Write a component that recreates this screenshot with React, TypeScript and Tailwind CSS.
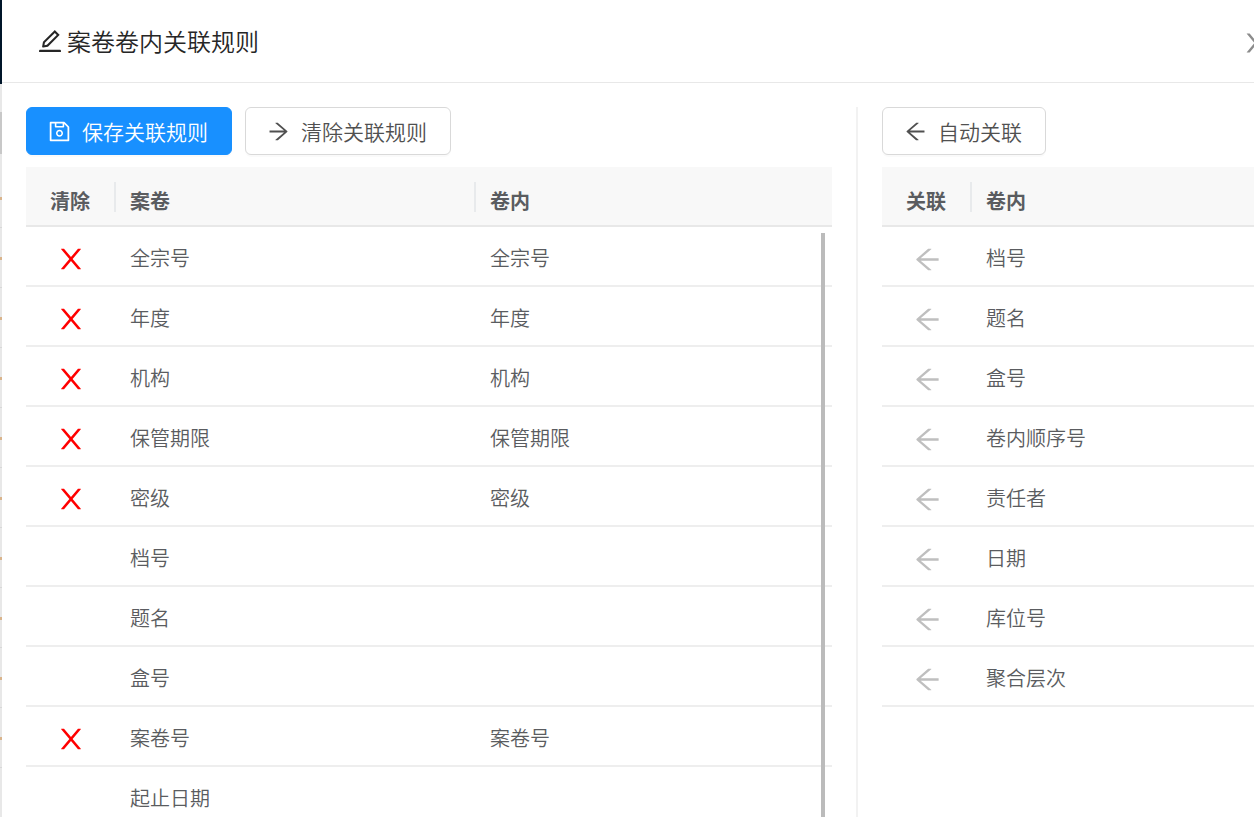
import type { ReactNode } from "react";
import {
  AiOutlineArrowLeft,
  AiOutlineArrowRight,
  AiOutlineEdit,
  AiOutlineSave,
} from "react-icons/ai";

const rules = [
  { volume: "全宗号", item: "全宗号" },
  { volume: "年度", item: "年度" },
  { volume: "机构", item: "机构" },
  { volume: "保管期限", item: "保管期限" },
  { volume: "密级", item: "密级" },
  { volume: "档号", item: "" },
  { volume: "题名", item: "" },
  { volume: "盒号", item: "" },
  { volume: "案卷号", item: "案卷号" },
  { volume: "起止日期", item: "" },
];

const fields = ["档号", "题名", "盒号", "卷内顺序号", "责任者", "日期", "库位号", "聚合层次"];

function CloseIcon({ size }: { size: number }) {
  return (
    <svg viewBox="0 0 1024 1024" width={size} height={size} fill="currentColor" aria-hidden="true">
      <path d="M563.8 512l262.5-312.9c4.4-5.2.7-13.1-6.1-13.1h-79.8c-4.7 0-9.2 2.1-12.3 5.7L511.6 449.8 295.1 191.7c-3-3.6-7.5-5.7-12.3-5.7H203c-6.8 0-10.5 7.9-6.1 13.1L459.4 512 196.9 824.9A7.95 7.95 0 0 0 203 838h79.8c4.7 0 9.2-2.1 12.3-5.7l216.5-258.1 216.5 258.1c3 3.6 7.5 5.7 12.3 5.7h79.8c6.8 0 10.5-7.9 6.1-13.1L563.8 512z" />
    </svg>
  );
}

function HeadCell({ children, center, last }: { children: ReactNode; center?: boolean; last?: boolean }) {
  return (
    <th className="h-[60px] border-b-2 border-[#e8e8e8] bg-[#f8f8f8] p-0 pt-[2px] text-left font-bold">
      <div
        className={`flex h-[30px] items-end leading-[22px] ${center ? "justify-center" : "pl-[14px]"} ${
          last ? "" : "border-r-2 border-[#e8eaec]"
        }`}
      >
        {children}
      </div>
    </th>
  );
}

function Cell({ children, center }: { children?: ReactNode; center?: boolean }) {
  return (
    <td className={`h-[60px] border-b-2 border-[#eeeeee] p-0 ${center ? "pt-[6px]" : "pl-[14px] pt-1"}`}>
      {children}
    </td>
  );
}

function Button({ icon, children, primary }: { icon: ReactNode; children: ReactNode; primary?: boolean }) {
  return (
    <button
      type="button"
      className={`flex h-12 items-center gap-[10px] rounded-md border pl-5 pr-[23px] text-[21px] shadow-[0_2px_0_rgba(0,0,0,0.02)] ${
        primary ? "border-[#1890ff] bg-[#1890ff] text-white" : "border-[#d9d9d9] bg-white text-[#505050]"
      }`}
    >
      {icon}
      <span className="pt-[2px]">{children}</span>
    </button>
  );
}

function App() {
  return (
    <div className="flex h-screen overflow-hidden bg-white font-['Noto_Sans_CJK_SC',sans-serif] font-[350] text-[#5a5c60]">
      {/* edge of the page behind the drawer */}
      <div className="w-[2px] shrink-0 bg-[#e8e8e8]">
        <div className="h-[84px] bg-[#001529]" />
        <div className="mt-7 h-[42px] bg-[#c8c8c8]" />
        <div className="mt-[14px]">
          {rules.map((rule) => (
            <div key={rule.volume} className="h-[60px] border-b border-[#d8d8d8] pt-[29px]">
              <div className="h-[3px] bg-[#d9b48c]" />
            </div>
          ))}
        </div>
      </div>

      <div className="flex min-w-0 flex-1 flex-col">
        <header className="flex h-[83px] shrink-0 items-center justify-between overflow-hidden border-b border-[#e8e8e8] pl-[34px]">
          <h1 className="flex items-center gap-[3px] text-2xl text-[#262626]">
            <AiOutlineEdit size={28} />
            案卷卷内关联规则
          </h1>
          <button type="button" aria-label="关闭" className="-mr-[17px] pt-[3px] text-[#8c8c8c]">
            <CloseIcon size={30} />
          </button>
        </header>

        <main className="flex min-h-0 flex-1 pt-6">
          <section className="relative flex min-w-0 flex-1 flex-col overflow-hidden border-r-2 border-[#f2f2f2] px-6">
            <div className="flex shrink-0 gap-[13px]">
              <Button primary icon={<AiOutlineSave size={25} />}>保存关联规则</Button>
              <Button icon={<AiOutlineArrowRight size={25} />}>清除关联规则</Button>
            </div>
            <table className="mt-3 w-full table-fixed border-separate border-spacing-0 text-xl">
              <colgroup>
                <col className="w-[90px]" />
                <col className="w-[360px]" />
                <col />
              </colgroup>
              <thead>
                <tr>
                  <HeadCell center>清除</HeadCell>
                  <HeadCell>案卷</HeadCell>
                  <HeadCell last>卷内</HeadCell>
                </tr>
              </thead>
              <tbody>
                {rules.map((rule) => (
                  <tr key={rule.volume}>
                    <Cell center>
                      {rule.item && (
                        <button type="button" aria-label="清除" className="mx-auto block text-[#ff0000]">
                          <CloseIcon size={32} />
                        </button>
                      )}
                    </Cell>
                    <Cell>{rule.volume}</Cell>
                    <Cell>{rule.item}</Cell>
                  </tr>
                ))}
              </tbody>
            </table>
            <div className="absolute bottom-0 right-[31px] top-[126px] w-[4px] bg-[#bbbbbb]" />
          </section>

          <section className="w-[396px] shrink-0 overflow-hidden pl-6">
            <div className="flex">
              <Button icon={<AiOutlineArrowLeft size={25} />}>自动关联</Button>
            </div>
            <table className="mt-3 w-full table-fixed border-separate border-spacing-0 text-xl">
              <colgroup>
                <col className="w-[90px]" />
                <col />
              </colgroup>
              <thead>
                <tr>
                  <HeadCell center>关联</HeadCell>
                  <HeadCell last>卷内</HeadCell>
                </tr>
              </thead>
              <tbody>
                {fields.map((field) => (
                  <tr key={field}>
                    <Cell center>
                      <button type="button" aria-label="关联" className="mx-auto block text-[#bfbfbf]">
                        <AiOutlineArrowLeft size={31} />
                      </button>
                    </Cell>
                    <Cell>{field}</Cell>
                  </tr>
                ))}
              </tbody>
            </table>
          </section>
        </main>
      </div>
    </div>
  );
}

export default App;
